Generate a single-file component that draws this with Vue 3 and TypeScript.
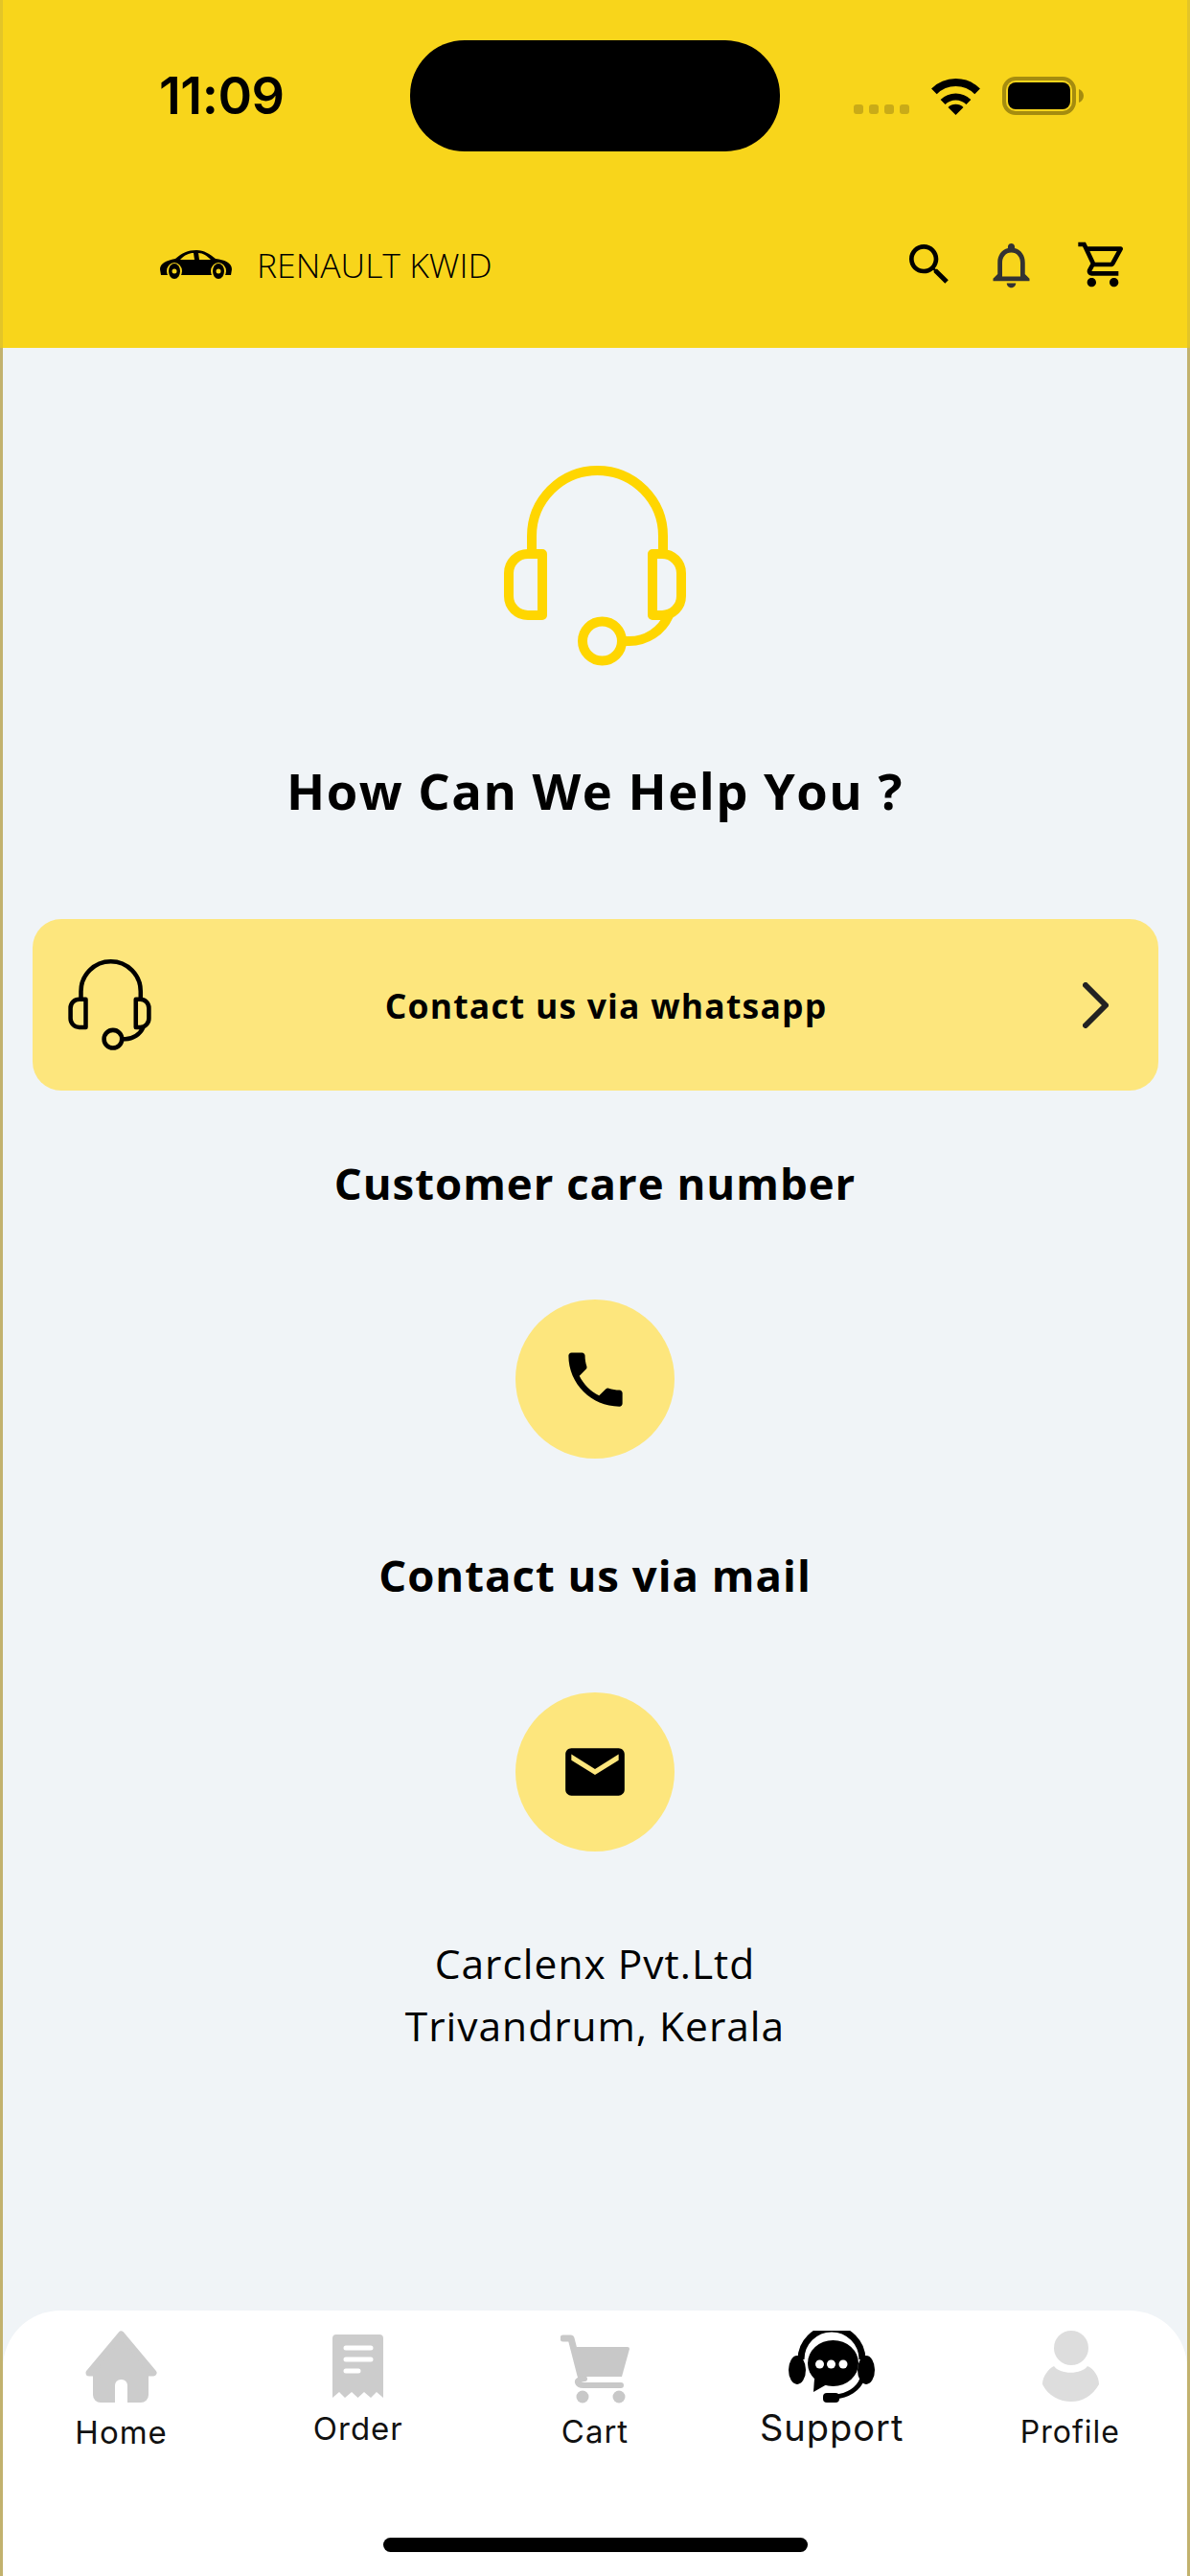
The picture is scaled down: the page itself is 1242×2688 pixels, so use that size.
<script setup lang="ts">
interface Tab {
  key: string
  label: string
  active?: boolean
}

const tabs: Tab[] = [
  { key: 'home', label: 'Home' },
  { key: 'order', label: 'Order' },
  { key: 'cart', label: 'Cart' },
  { key: 'support', label: 'Support', active: true },
  { key: 'profile', label: 'Profile' }
]

const HEADSET_PATHS = [
  'M29 90V73.5A68.5 68.5 0 0 1 166 73.5V90',
  'M40 92H25A20 20 0 0 0 5 112V136A20 20 0 0 0 25 156H40Z',
  'M155 92H165A20 20 0 0 1 185 112V136A20 20 0 0 1 165 156H155Z',
  'M123 183H130A45 45 0 0 0 172 156'
]
</script>

<template>
  <div class="screen">
    <header class="top">
      <div class="status">
        <span class="time">11:09</span>
        <span class="island"></span>
        <span class="status-icons">
          <span class="dots"><i></i><i></i><i></i><i></i></span>
          <svg class="wifi" width="53" height="38" viewBox="0 0 53 38">
            <path d="M3.9 13.4A32 32 0 0 1 49.1 13.4" fill="none" stroke="#000" stroke-width="8" />
            <path d="M13.1 24.6A19 19 0 0 1 39.9 24.6" fill="none" stroke="#000" stroke-width="7" />
            <path d="M26.5 38L18.5 30A11.3 11.3 0 0 1 34.5 30Z" fill="#000" />
          </svg>
          <svg class="battery" width="85" height="40" viewBox="0 0 85 40">
            <rect x="2" y="2" width="73" height="36" rx="12" fill="none" stroke="#a58c0f" stroke-width="4" />
            <rect x="6" y="6" width="65" height="28" rx="8" fill="#000" />
            <path d="M80 13C83 14 85 17 85 20S83 26 80 27Z" fill="#a58c0f" />
          </svg>
        </span>
      </div>
      <div class="toolbar">
        <div class="vehicle">
          <svg width="75" height="30" viewBox="0 0 75 30">
            <path d="M0 20C0 14 6 11 16 9C23 3 29 0 38 0C46 0 52 4 58 9C67 10 75 13 75 20L74 26H1Z" fill="#000" />
            <path d="M21 10C26 5 30 3 35 3L36 10ZM40 3C45 3 49 6 53 10H41Z" fill="#f8d51b" />
            <ellipse cx="15" cy="22" rx="8" ry="9" fill="#f8d51b" />
            <ellipse cx="61" cy="22" rx="8" ry="9" fill="#f8d51b" />
            <ellipse cx="15" cy="22" rx="6" ry="8" fill="#000" />
            <ellipse cx="61" cy="22" rx="6" ry="8" fill="#000" />
            <circle cx="15" cy="22" r="2.5" fill="#f8d51b" />
            <circle cx="61" cy="22" r="2.5" fill="#f8d51b" />
          </svg>
          <span class="vehicle-name">RENAULT KWID</span>
        </div>
        <div class="actions">
          <svg width="56" height="56" viewBox="0 0 24 24">
            <path d="M15.5 14h-.79l-.28-.27C15.41 12.59 16 11.11 16 9.5 16 5.91 13.09 3 9.5 3S3 5.91 3 9.5 5.91 16 9.5 16c1.61 0 3.09-.59 4.23-1.57l.27.28v.79l5 4.99L20.49 19l-4.99-5zm-6 0C7.01 14 5 11.99 5 9.5S7.01 5 9.5 5 14 7.01 14 9.5 11.99 14 9.5 14z" fill="#000" />
          </svg>
          <svg width="57" height="57" viewBox="0 0 24 24">
            <path d="M12 22c1.1 0 2-.9 2-2h-4c0 1.1.9 2 2 2zm6-6v-5c0-3.07-1.63-5.64-4.5-6.32V4c0-.83-.67-1.5-1.5-1.5s-1.5.67-1.5 1.5v.68C7.64 5.36 6 7.92 6 11v5l-2 2v1h16v-1l-2-2zm-2 1H8v-6c0-2.48 1.51-4.5 4-4.5s4 2.02 4 4.5v6z" fill="#333" />
          </svg>
          <svg class="action-cart" width="56" height="56" viewBox="0 0 24 24">
            <path d="M15.55 13c.75 0 1.41-.41 1.75-1.03l3.58-6.49c.37-.66-.11-1.48-.87-1.48H5.21l-.94-2H1v2h2l3.6 7.59-1.35 2.44C4.52 15.37 5.48 17 7 17h12v-2H7l1.1-2h7.45zM6.16 6h12.15l-2.76 5H8.53L6.16 6zM7 18c-1.1 0-1.99.9-1.99 2S5.9 22 7 22s2-.9 2-2-.9-2-2-2zm10 0c-1.1 0-1.99.9-1.99 2s.89 2 1.99 2 2-.9 2-2-.9-2-2-2z" fill="#000" />
          </svg>
        </div>
      </div>
    </header>

    <div class="page">
      <main class="help">
        <svg class="hero-icon" width="190" height="209" viewBox="0 0 190 209">
          <g fill="none" stroke="#ffd600" stroke-width="10" stroke-linejoin="round">
            <path v-for="d in HEADSET_PATHS" :key="d" :d="d" />
            <circle cx="102.5" cy="183" r="20.5" />
          </g>
        </svg>
        <h1 class="title">How Can We Help You ?</h1>

        <div class="whatsapp">
          <svg width="87" height="95" viewBox="0 0 190 209">
            <g fill="none" stroke="#000" stroke-width="10" stroke-linejoin="round">
              <path v-for="d in HEADSET_PATHS" :key="d" :d="d" />
              <circle cx="102.5" cy="183" r="20.5" />
            </g>
          </svg>
          <span class="whatsapp-label">Contact us via whatsapp</span>
          <svg width="27" height="48" viewBox="0 0 27 48">
            <path d="M3 3L24 24L3 45" fill="none" stroke="#222" stroke-width="6" stroke-linecap="round" stroke-linejoin="round" />
          </svg>
        </div>

        <h2 class="section">Customer care number</h2>
        <div class="round-btn">
          <svg width="75" height="75" viewBox="0 0 24 24">
            <path d="M6.62 10.79c1.44 2.83 3.76 5.14 6.59 6.59l2.2-2.2c.27-.27.67-.36 1.02-.24 1.12.37 2.33.57 3.57.57.55 0 1 .45 1 1V20c0 .55-.45 1-1 1-9.39 0-17-7.61-17-17 0-.55.45-1 1-1h3.5c.55 0 1 .45 1 1 0 1.25.2 2.45.57 3.57.11.35.03.74-.25 1.02l-2.2 2.2z" fill="#000" />
          </svg>
        </div>

        <h2 class="section section-mail">Contact us via mail</h2>
        <div class="round-btn">
          <svg width="74" height="74" viewBox="0 0 24 24">
            <path d="M20 4H4c-1.1 0-1.99.9-1.99 2L2 18c0 1.1.9 2 2 2h16c1.1 0 2-.9 2-2V6c0-1.1-.9-2-2-2zm0 4l-8 5-8-5V6l8 5 8-5v2z" fill="#000" />
          </svg>
        </div>

        <p class="address">Carclenx Pvt.Ltd<br />Trivandrum, Kerala</p>
      </main>

      <nav class="tabs">
        <div class="tab-row">
          <div v-for="tab in tabs" :key="tab.key" class="tab" :class="['tab-' + tab.key, { active: tab.active }]">
            <svg v-if="tab.key === 'home'" width="75" height="75" viewBox="0 0 75 75">
              <path d="M37.5 4L71 44H4Z" fill="#ccc" stroke="#ccc" stroke-width="7" stroke-linejoin="round" />
              <rect x="8" y="38" width="58" height="37" rx="8" fill="#ccc" />
              <path d="M31 75V57A6 6 0 0 1 37 51H38A6 6 0 0 1 44 57V75Z" fill="#fff" />
            </svg>
            <svg v-else-if="tab.key === 'order'" width="53" height="66" viewBox="0 0 53 66">
              <path d="M4 0H49A4 4 0 0 1 53 4V66L46 60L40 66L33 60L26.5 66L20 60L13 66L7 60L0 66V4A4 4 0 0 1 4 0Z" fill="#ccc" />
              <path d="M14 14H40M14 26H40M14 38H27" fill="none" stroke="#fff" stroke-width="5" stroke-linecap="round" />
            </svg>
            <svg v-else-if="tab.key === 'cart'" width="72" height="72" viewBox="0 0 72 72">
              <path d="M3 4H11L21 43" fill="none" stroke="#c8c8c8" stroke-width="7" stroke-linecap="round" stroke-linejoin="round" />
              <path d="M15 13H70A2 2 0 0 1 72 15L64 44H23Z" fill="#c8c8c8" />
              <path d="M25 46Q17 47 18 50Q19 53 24 53H63" fill="none" stroke="#c8c8c8" stroke-width="6" stroke-linecap="round" />
              <circle cx="23" cy="65" r="6.5" fill="#c8c8c8" />
              <circle cx="61" cy="65" r="6.5" fill="#c8c8c8" />
            </svg>
            <svg v-else-if="tab.key === 'support'" width="90" height="75" viewBox="0 0 90 75">
              <path d="M13 30A32 32 0 0 1 77 30" fill="none" stroke="#000" stroke-width="7" />
              <ellipse cx="9" cy="41" rx="9" ry="15" fill="#000" />
              <ellipse cx="81" cy="41" rx="9" ry="15" fill="#000" />
              <ellipse cx="46.5" cy="34" rx="26.5" ry="24" fill="#000" />
              <path d="M27 50L26 64L40 56Z" fill="#000" />
              <circle cx="32.5" cy="35" r="4.5" fill="#fff" />
              <circle cx="44.5" cy="35" r="4.5" fill="#fff" />
              <circle cx="57" cy="35" r="4.5" fill="#fff" />
              <path d="M77 50C73 61 62 68 48 69" fill="none" stroke="#000" stroke-width="5" />
              <rect x="36" y="65" width="17" height="10" rx="4" fill="#000" />
            </svg>
            <svg v-else width="59" height="74" viewBox="0 0 59 74">
              <ellipse cx="30" cy="18" rx="18" ry="18" fill="#ddd" />
              <path d="M12 37C18 46 41 46 47 37C54 40 59 48 59 56C52 68 42 74 30 74C18 74 6 68 0 56C0 48 6 40 12 37Z" fill="#ddd" />
            </svg>
            <span class="tab-label">{{ tab.label }}</span>
          </div>
        </div>
        <span class="home-bar"></span>
      </nav>
    </div>
  </div>
</template>

<style scoped>
.screen {
  display: flex;
  flex-direction: column;
  width: 1242px;
  height: 2688px;
  overflow: hidden;
  background: #c2b26e;
  font-family: "Open Sans", "Noto Sans", sans-serif;
  color: #000;
}

.top {
  height: 363px;
  flex: 0 0 auto;
  background: #f8d51b;
  box-shadow: inset 3px 0 0 #e3c528, inset -3px 0 0 #e3c528;
}

.status {
  display: grid;
  grid-template-columns: 428px 386px 1fr;
  padding-top: 42px;
  height: 114px;
}

.time {
  padding-left: 166px;
  font-family: Inter, sans-serif;
  font-size: 54px;
  font-weight: 600;
  line-height: 116px;
  letter-spacing: -0.5px;
}

.island {
  background: #000;
  border-radius: 57px;
}

.status-icons {
  display: flex;
  align-items: flex-end;
  height: 78px;
  padding-left: 77px;
}

.dots {
  display: flex;
  gap: 6px;
  margin-right: 22px;
  margin-bottom: 1px;
}

.dots i {
  width: 10px;
  height: 10px;
  border-radius: 3px;
  background: #c9ab18;
}

.wifi {
  margin-right: 22px;
}

.toolbar {
  display: flex;
  align-items: center;
  justify-content: space-between;
  height: 84px;
  margin-top: 78px;
  padding: 0 63px 0 167px;
}

.vehicle {
  display: flex;
  align-items: center;
  gap: 26px;
}

.vehicle-name {
  font-size: 35.5px;
  font-weight: 300;
}

.actions {
  display: flex;
  align-items: center;
  gap: 29px;
}

.action-cart {
  margin-left: 10px;
}

.page {
  flex: 1;
  display: flex;
  flex-direction: column;
  margin: 0 3px;
  background: #f0f4f7;
}

.help {
  flex: 1;
  display: flex;
  flex-direction: column;
  align-items: center;
}

.hero-icon {
  margin-top: 123px;
}

.title {
  margin: 100px 0 0;
  font-size: 52.5px;
  font-weight: 700;
  line-height: 60px;
  letter-spacing: 1.5px;
}

.whatsapp {
  display: flex;
  align-items: center;
  box-sizing: border-box;
  width: 1175px;
  height: 179px;
  margin-top: 104px;
  padding: 0 52px 0 37px;
  background: #fde67d;
  border-radius: 30px;
}

.whatsapp-label {
  flex: 1;
  padding-right: 22px;
  text-align: center;
  font-size: 35.5px;
  font-weight: 700;
  letter-spacing: 1.2px;
}

.section {
  margin: 68px 0 0;
  font-size: 45.5px;
  font-weight: 700;
  line-height: 56px;
  letter-spacing: 1px;
}

.section-mail {
  margin-top: 93px;
}

.round-btn {
  display: flex;
  align-items: center;
  justify-content: center;
  width: 166px;
  height: 166px;
  margin-top: 94px;
  border-radius: 50%;
  background: #fde67d;
}

.section-mail + .round-btn {
  margin-top: 95px;
}

.address {
  margin: 84px 0 0;
  font-size: 42.5px;
  font-weight: 500;
  line-height: 65px;
  text-align: center;
  letter-spacing: 1px;
}

.tabs {
  display: flex;
  flex-direction: column;
  align-items: center;
  flex: 0 0 277px;
  background: #fff;
  border-radius: 60px 60px 0 0;
}

.tab-row {
  display: grid;
  grid-template-columns: repeat(5, 1fr);
  width: 100%;
  height: 237px;
  box-sizing: border-box;
  padding-top: 21px;
}

.tab {
  display: flex;
  flex-direction: column;
  align-items: center;
}

.tab-label {
  margin-top: 11px;
  font-family: Inter, sans-serif;
  font-size: 33px;
  line-height: 40px;
  letter-spacing: 1px;
  color: #111;
}

.tab-order svg,
.tab-cart svg {
  margin-top: 4px;
}

.tab-order .tab-label {
  margin-top: 12px;
}

.tab-cart .tab-label {
  margin-top: 9px;
}

.tab-profile svg {
  margin-left: 5px;
}

.tab-profile .tab-label {
  margin-top: 12px;
  margin-left: 3px;
  font-size: 32px;
}

.tab-support .tab-label {
  margin-top: 6px;
  font-size: 38px;
}

.home-bar {
  width: 443px;
  height: 15px;
  border-radius: 8px;
  background: #000;
}
</style>

<style>
html,
body {
  margin: 0;
  background: #fff;
}
</style>
